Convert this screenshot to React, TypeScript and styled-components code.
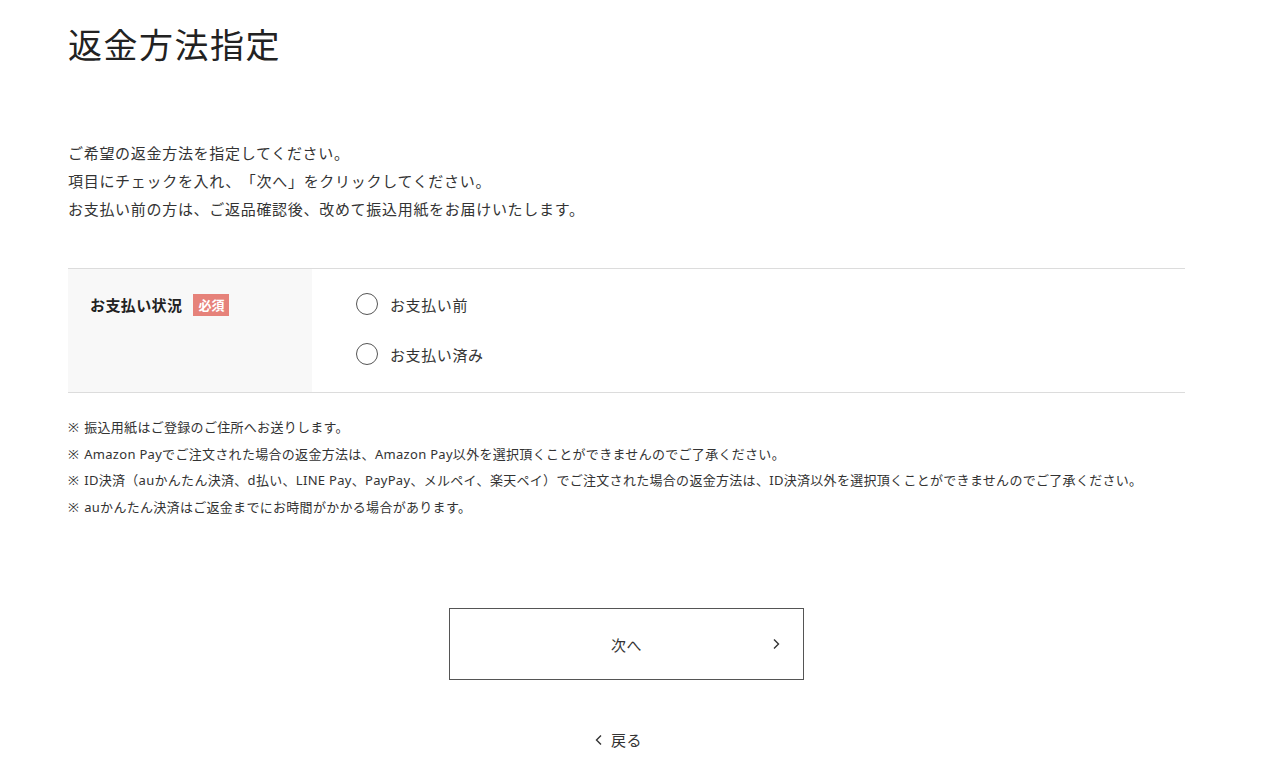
import { createGlobalStyle, styled } from "styled-components";

const GlobalStyle = createGlobalStyle`
  body {
    margin: 0;
    background: #fff;
    color: #333;
    font-family: "Noto Sans", "Noto Sans CJK JP", sans-serif;
    text-spacing-trim: space-all;
    letter-spacing: 0.4px;
  }
`;

const Page = styled.main`
  width: 1117px;
  padding: 21px 0 40px 68px;
`;

const Title = styled.h1`
  margin: 0;
  font-size: 34px;
  font-weight: 400;
  line-height: 48px;
  letter-spacing: 1.5px;
  color: #222;
`;

const Intro = styled.p`
  margin: 70px 0 0;
  font-size: 15px;
  line-height: 28px;
  letter-spacing: 0.7px;
`;

const Table = styled.div`
  margin-top: 45px;
  display: grid;
  grid-template-columns: 244px 1fr;
  border-top: 1px solid #dcdcdc;
  border-bottom: 1px solid #dcdcdc;
`;

const Head = styled.div`
  background: #f8f8f8;
  padding: 24px 0 0 22px;
  display: flex;
  align-items: flex-start;
  gap: 11px;
  font-size: 15px;
  font-weight: 700;
  line-height: 24px;
  color: #222;
`;

const Badge = styled.span`
  display: inline-flex;
  align-items: center;
  justify-content: center;
  width: 36px;
  height: 22px;
  margin-top: 1px;
  background: #e6827a;
  color: #fff;
  font-size: 13px;
  font-weight: 700;
  letter-spacing: 0;
`;

const Options = styled.div`
  padding: 20px 0 23px 44px;
  display: flex;
  flex-direction: column;
  gap: 20px;
`;

const Option = styled.label`
  display: flex;
  align-items: center;
  gap: 12px;
  height: 30px;
  font-size: 15px;
  letter-spacing: 0.6px;
  cursor: pointer;
`;

const Radio = styled.span`
  width: 22px;
  height: 22px;
  box-sizing: border-box;
  border: 1.5px solid #555;
  border-radius: 50%;
  background: #fff;
`;

const Notes = styled.ul`
  margin: 21px 0 0;
  padding: 0;
  list-style: none;
  font-size: 13px;
  line-height: 26.5px;
  letter-spacing: 0.3px;
`;

const Mark = styled.span`
  margin-right: 5px;
`;

const Actions = styled.div`
  margin-top: 88px;
  display: flex;
  flex-direction: column;
  align-items: center;
  gap: 48px;
`;

const NextButton = styled.button`
  position: relative;
  width: 355px;
  height: 72px;
  border: 1px solid #555;
  background: #fff;
  color: #333;
  font-family: inherit;
  font-size: 15px;
  letter-spacing: 0.4px;
  cursor: pointer;
`;

const Arrow = styled.svg`
  position: absolute;
  right: 23px;
  top: 50%;
  transform: translateY(-50%);
`;

const BackLink = styled.a`
  display: flex;
  align-items: center;
  gap: 8px;
  margin-right: 16px;
  font-size: 15px;
  line-height: 24px;
  color: #333;
  text-decoration: none;
`;

const notes = [
  "振込用紙はご登録のご住所へお送りします。",
  "Amazon Payでご注文された場合の返金方法は、Amazon Pay以外を選択頂くことができませんのでご了承ください。",
  "ID決済（auかんたん決済、d払い、LINE Pay、PayPay、メルペイ、楽天ペイ）でご注文された場合の返金方法は、ID決済以外を選択頂くことができませんのでご了承ください。",
  "auかんたん決済はご返金までにお時間がかかる場合があります。",
];

export default function App() {
  return (
    <>
      <GlobalStyle />
      <Page>
        <Title>返金方法指定</Title>
        <Intro>
          ご希望の返金方法を指定してください。
          <br />
          項目にチェックを入れ、「次へ」をクリックしてください。
          <br />
          お支払い前の方は、ご返品確認後、改めて振込用紙をお届けいたします。
        </Intro>
        <Table>
          <Head>
            お支払い状況<Badge>必須</Badge>
          </Head>
          <Options>
            <Option>
              <Radio />
              お支払い前
            </Option>
            <Option>
              <Radio />
              お支払い済み
            </Option>
          </Options>
        </Table>
        <Notes>
          {notes.map((n) => (
            <li key={n}>
              <Mark>※</Mark>
              {n}
            </li>
          ))}
        </Notes>
        <Actions>
          <NextButton type="button">
            次へ
            <Arrow width="8" height="12" viewBox="0 0 8 12" fill="none">
              <path d="M2 1.5L6.5 6L2 10.5" stroke="#333" strokeWidth="1.4" />
            </Arrow>
          </NextButton>
          <BackLink href="#">
            <svg width="8" height="12" viewBox="0 0 8 12" fill="none">
              <path d="M6 1.5L1.5 6L6 10.5" stroke="#333" strokeWidth="1.4" />
            </svg>
            戻る
          </BackLink>
        </Actions>
      </Page>
    </>
  );
}
